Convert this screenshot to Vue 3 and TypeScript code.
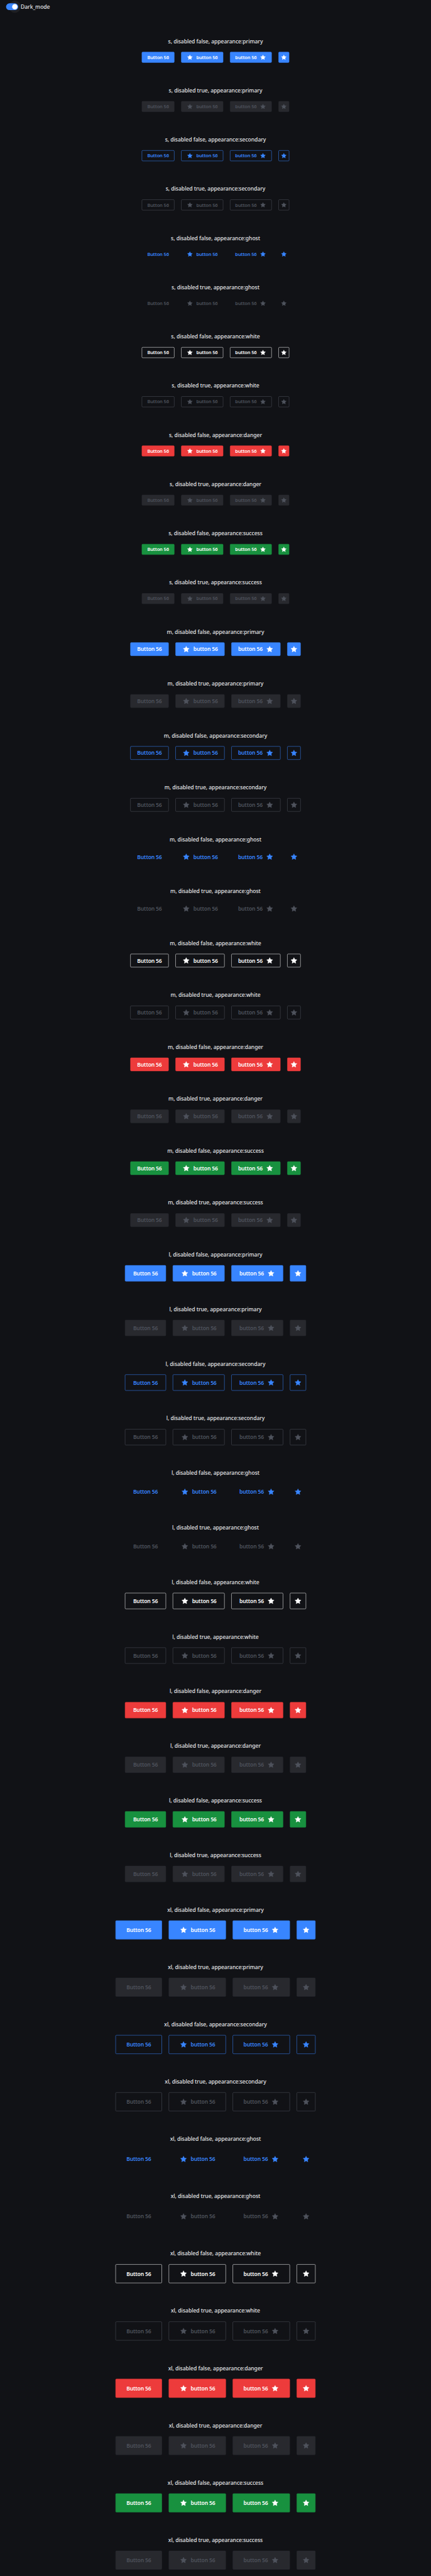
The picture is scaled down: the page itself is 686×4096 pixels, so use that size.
<script setup lang="ts">
type Size = 's' | 'm' | 'l' | 'xl'
type Appearance = 'primary' | 'secondary' | 'ghost' | 'white' | 'danger' | 'success'

interface Sample {
  size: Size
  appearance: Appearance
  disabled: boolean
}

const sizes: Size[] = ['s', 'm', 'l', 'xl']
const appearances: Appearance[] = ['primary', 'secondary', 'ghost', 'white', 'danger', 'success']

const samples: Sample[] = sizes.flatMap((size) =>
  appearances.flatMap((appearance) =>
    [false, true].map((disabled) => ({ size, appearance, disabled })),
  ),
)

const star =
  'M12 3.1L14.8 8.7L21.1 9.6L16.7 14.1L17.6 20.4L12 17.5L6.4 20.4L7.3 14.1L2.9 9.6L9.2 8.7z'
</script>

<template>
  <div class="viewport">
    <main class="page">
      <header class="mode">
        <span class="switch"><span class="thumb"></span></span>
        <span class="mode-label">Dark_mode</span>
      </header>
      <section v-for="(s, i) in samples" :key="i" class="sample">
        <div class="title">{{ s.size }}, disabled {{ s.disabled }}, appearance:{{ s.appearance }}</div>
        <div class="row" :class="[s.size, s.appearance]">
          <button class="btn" :disabled="s.disabled">
            <span class="text">Button 56</span>
          </button>
          <button class="btn wide" :disabled="s.disabled">
            <svg class="icon" viewBox="0 0 24 24"><path :d="star" /></svg>
            <span class="text">button 56</span>
          </button>
          <button class="btn wide" :disabled="s.disabled">
            <span class="text">button 56</span>
            <svg class="icon" viewBox="0 0 24 24"><path :d="star" /></svg>
          </button>
          <button class="btn square" :disabled="s.disabled">
            <svg class="icon" viewBox="0 0 24 24"><path :d="star" /></svg>
          </button>
        </div>
      </section>
    </main>
  </div>
</template>

<style>
html,
body {
  margin: 0;
  background: #111216;
}
</style>

<style scoped>
.viewport {
  width: 686px;
  height: 4096px;
  overflow: hidden;
  background: #111216;
}

.page {
  box-sizing: border-box;
  width: 1280px;
  height: 7644px;
  padding-top: 10px;
  transform: scale(0.53592);
  transform-origin: 0 0;
  color: #e5e6e8;
  font-family: 'Noto Sans', sans-serif;
  font-size: 16px;
  font-weight: 500;
  line-height: 24px;
  letter-spacing: -0.08px;
}

.mode {
  display: flex;
  align-items: center;
  isolation: isolate;
  height: 20px;
  margin-bottom: 80px;
  padding-left: 18px;
}

.switch {
  position: relative;
  display: flex;
  justify-content: flex-end;
  align-items: center;
  box-sizing: border-box;
  width: 36px;
  height: 20px;
  padding-right: 2px;
  border-radius: 10px;
  background: #3885ff;
}

/* halo behind the track, centred on the thumb */
.switch::before {
  content: '';
  position: absolute;
  z-index: -1;
  top: -8px;
  right: -8px;
  width: 36px;
  height: 36px;
  border-radius: 50%;
  background: #1f2024;
}

.thumb {
  width: 16px;
  height: 16px;
  border-radius: 50%;
  background: #fff;
}

.mode-label {
  margin-left: 7.5px;
}

.sample {
  display: flex;
  flex-direction: column;
  align-items: center;
  gap: 20px;
  margin-bottom: 70px;
}

.row {
  display: flex;
  gap: 20px;
}

.s {
  --h: 32px;
  --w: 97px;
  --ww: 124.5px;
  --pad: 16px;
  --icon: 20px;
  --fs: 14px;
  --ls: -0.3px;
}

.m,
.l,
.xl {
  --h: 40px;
  --w: 114px;
  --ww: 146px;
  --pad: 20px;
  --icon: 24px;
  --fs: 16px;
  --ls: -0.34px;
}

.l {
  --h: 48px;
  --w: 122px;
  --ww: 154px;
  --pad: 24px;
}

.xl {
  --h: 56px;
  --w: 138px;
  --ww: 170px;
  --pad: 32px;
}

.primary {
  --bg: #3885ff;
  --fg: #fff;
  --line: #3885ff;
}

.danger {
  --bg: #ed3b3b;
  --fg: #fff;
  --line: #ed3b3b;
}

.success {
  --bg: #18913f;
  --fg: #fff;
  --line: #18913f;
}

.secondary {
  --bg: transparent;
  --fg: #3885ff;
  --line: #3885ff;
}

.white {
  --bg: transparent;
  --fg: #fff;
  --line: #fff;
}

.ghost {
  --bg: transparent;
  --fg: #3885ff;
  --line: transparent;
}

.btn {
  display: flex;
  align-items: center;
  justify-content: center;
  box-sizing: border-box;
  width: var(--w);
  height: var(--h);
  margin: 0;
  padding: 0;
  border: 1px solid var(--line);
  border-radius: 3px;
  background: var(--bg);
  color: var(--fg);
  font-family: inherit;
  font-size: var(--fs);
  font-weight: 650;
  line-height: 20px;
  letter-spacing: var(--ls);
}

.btn.wide {
  justify-content: space-between;
  width: var(--ww);
  padding: 0 calc(var(--pad) - 1px);
}

.btn.square {
  width: var(--h);
}

.btn:disabled {
  color: #4e525c;
}

.primary .btn:disabled,
.danger .btn:disabled,
.success .btn:disabled {
  border-color: #28292e;
  background: #28292e;
}

.secondary .btn:disabled,
.white .btn:disabled {
  border-color: #4e525c;
}

.text {
  white-space: nowrap;
}

.icon {
  flex: none;
  width: var(--icon);
  height: var(--icon);
  fill: currentColor;
  stroke: currentColor;
  stroke-width: 0.6;
  stroke-linejoin: round;
}
</style>
